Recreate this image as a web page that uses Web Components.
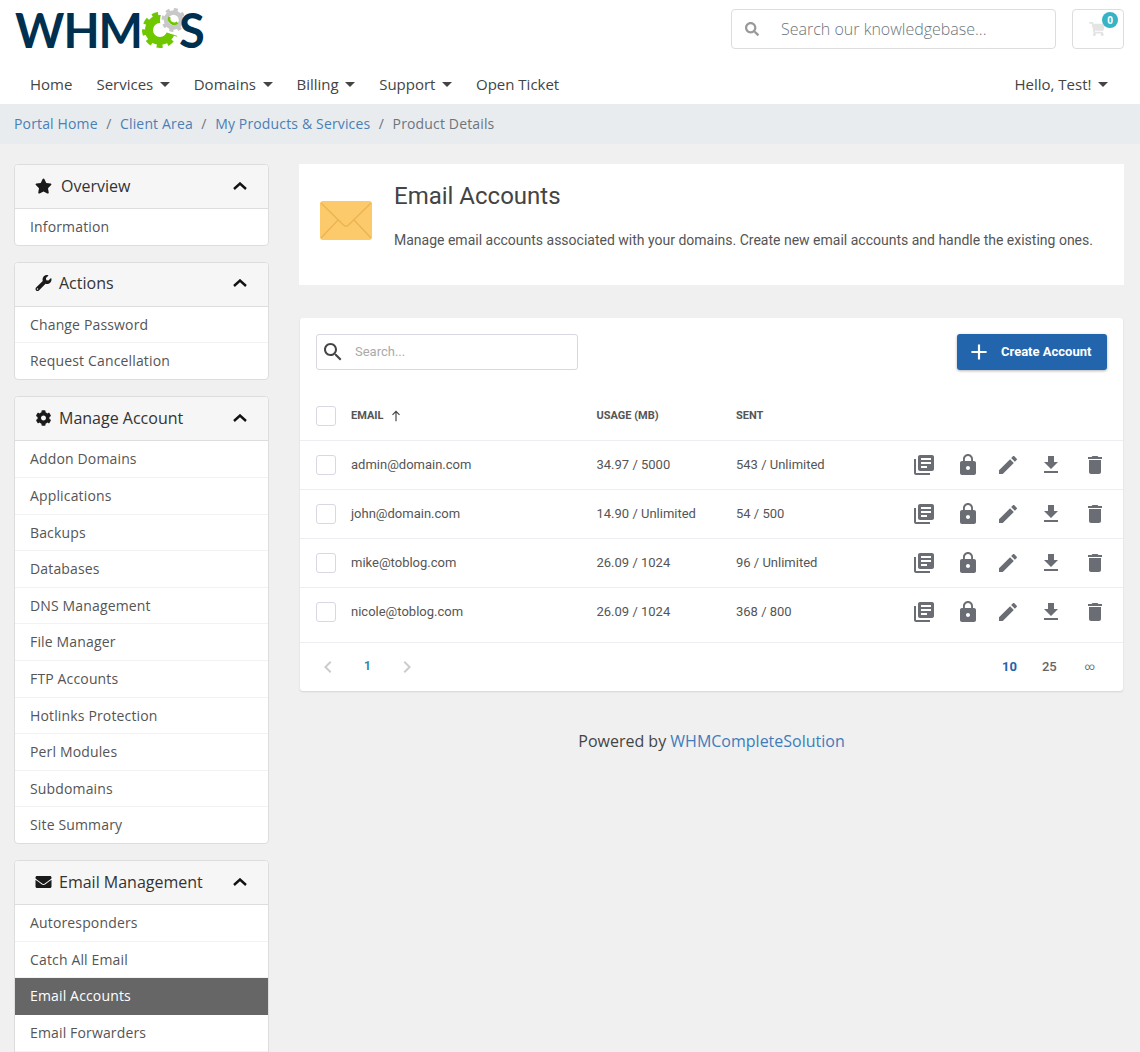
<!DOCTYPE html>
<html lang="en">
  <head>
    <meta charset="UTF-8" />
    <title>Email Accounts</title>
    <style>
      html, body { margin: 0; padding: 0; height: 1052px; overflow: hidden; }
      body { background: #f0f0f0; font-family: "Open Sans", sans-serif; color: #444; }
    </style>
  </head>
  <body>
    <site-header></site-header>
    <bread-crumbs>
      <a href="#">Portal Home</a>
      <a href="#">Client Area</a>
      <a href="#">My Products &amp; Services</a>
      <span>Product Details</span>
    </bread-crumbs>
    <page-body>
      <div slot="side">
        <side-panel title="Overview" icon="star">
          <side-item>Information</side-item>
        </side-panel>
        <side-panel title="Actions" icon="wrench">
          <side-item>Change Password</side-item>
          <side-item>Request Cancellation</side-item>
        </side-panel>
        <side-panel title="Manage Account" icon="cog">
          <side-item>Addon Domains</side-item>
          <side-item>Applications</side-item>
          <side-item>Backups</side-item>
          <side-item>Databases</side-item>
          <side-item>DNS Management</side-item>
          <side-item>File Manager</side-item>
          <side-item>FTP Accounts</side-item>
          <side-item>Hotlinks Protection</side-item>
          <side-item>Perl Modules</side-item>
          <side-item>Subdomains</side-item>
          <side-item>Site Summary</side-item>
        </side-panel>
        <side-panel title="Email Management" icon="envelope">
          <side-item>Autoresponders</side-item>
          <side-item>Catch All Email</side-item>
          <side-item active>Email Accounts</side-item>
          <side-item>Email Forwarders</side-item>
          <!-- next row starts right at the bottom edge of the window, no text visible -->
          <side-item></side-item>
        </side-panel>
      </div>
      <div slot="main">
        <page-heading title="Email Accounts">Manage email accounts associated with your domains. Create new email accounts and handle the existing ones.</page-heading>
        <accounts-table>
          <account-row email="admin@domain.com" usage="34.97 / 5000" sent="543 / Unlimited"></account-row>
          <account-row email="john@domain.com" usage="14.90 / Unlimited" sent="54 / 500"></account-row>
          <account-row email="mike@toblog.com" usage="26.09 / 1024" sent="96 / Unlimited"></account-row>
          <account-row email="nicole@toblog.com" usage="26.09 / 1024" sent="368 / 800"></account-row>
        </accounts-table>
        <site-footer></site-footer>
      </div>
    </page-body>

    <template id="site-header">
      <style>
        :host { display: block; background: #fff; height: 104px; }
        .top { display: flex; align-items: flex-start; padding: 9px 16px 0 15px; height: 57px; }
        .logo { display: flex; align-items: center; height: 42px; font-family: Lato, sans-serif; font-weight: 700; font-size: 47px; color: #00304f; letter-spacing: -1px; line-height: 42px; }
        .logo svg { width: 44px; height: 44px; margin: 0 -5px 0 -2px; flex: none; }
        .search { margin-left: auto; width: 323px; height: 38px; border: 1px solid #ddd; border-radius: 4px; display: flex; align-items: center; }
        .search svg { width: 14px; height: 14px; margin: 0 22px 0 13px; fill: #999; }
        .search span { font-size: 16px; font-weight: 300; color: #6c757d; }
        .cart { margin-left: 16px; width: 50px; height: 38px; border: 1px solid #ddd; border-radius: 4px; position: relative; display: flex; align-items: center; justify-content: center; }
        .cart svg { width: 16px; height: 14px; fill: #e4e4e4; margin-left: -2px; }
        .badge { position: absolute; top: 2px; right: 5px; width: 16px; height: 16px; border-radius: 50%; background: #36b3c4; color: #fff; font-size: 10px; font-weight: 700; line-height: 16px; text-align: center; }
        nav { display: flex; gap: 24px; padding: 0 32px 2px 30px; height: 36px; align-items: center; font-size: 15px; }
        nav .hello { margin-left: auto; }
        .caret::after { content: ""; display: inline-block; margin-left: 6.5px; vertical-align: 3px; border-top: 5px solid #444; border-left: 5px solid transparent; border-right: 5px solid transparent; }
      </style>
      <div class="top">
        <div class="logo">
          <span>WHM</span>
          <svg viewBox="0 0 44 44">
            <circle cx="20" cy="22" r="11" fill="none" stroke="#6fc700" stroke-width="8"/>
            <circle cx="20" cy="22" r="16" fill="none" stroke="#6fc700" stroke-width="4" stroke-dasharray="6 5.17"/>
            <path d="M22 23L44 18V30Z" fill="#fff"/>
            <circle cx="33.5" cy="12" r="13.5" fill="#fff"/>
            <circle cx="33.5" cy="12" r="7.5" fill="none" stroke="#c8c8c8" stroke-width="4.5"/>
            <circle cx="33.5" cy="12" r="10.5" fill="none" stroke="#c8c8c8" stroke-width="3" stroke-dasharray="4 4.25"/>
            <path d="M29.5 9a5 5 0 0 0 8 5.5" fill="none" stroke="#6fc700" stroke-width="2.5"/>
          </svg>
          <span>S</span>
        </div>
        <div class="search">
          <svg viewBox="0 0 512 512"><path d="M505 442.7L405.3 343c-4.5-4.5-10.6-7-17-7H372c27.6-35.3 44-79.7 44-128C416 93.1 322.9 0 208 0S0 93.1 0 208s93.1 208 208 208c48.3 0 92.7-16.4 128-44v16.3c0 6.4 2.5 12.5 7 17l99.7 99.7c9.4 9.4 24.6 9.4 33.9 0l28.3-28.3c9.4-9.4 9.4-24.6.1-34zM208 336c-70.7 0-128-57.2-128-128 0-70.7 57.2-128 128-128 70.7 0 128 57.2 128 128 0 70.7-57.2 128-128 128z"/></svg>
          <span>Search our knowledgebase...</span>
        </div>
        <div class="cart">
          <svg viewBox="0 0 576 512"><path d="M528.12 301.319l47.273-208C578.806 78.301 567.391 64 551.99 64H159.208l-9.166-44.81C147.758 8.021 137.93 0 126.529 0H24C10.745 0 0 10.745 0 24v16c0 13.255 10.745 24 24 24h69.883l70.248 343.435C147.325 417.1 136 435.222 136 456c0 30.928 25.072 56 56 56s56-25.072 56-56c0-15.674-6.447-29.835-16.824-40h209.647C430.447 426.165 424 440.326 424 456c0 30.928 25.072 56 56 56s56-25.072 56-56c0-22.172-12.888-41.332-31.579-50.405l5.517-24.276c3.413-15.018-8.002-29.319-23.403-29.319H218.117l-6.545-32h293.145c11.206 0 20.92-7.754 23.403-18.681z"/></svg>
          <span class="badge">0</span>
        </div>
      </div>
      <nav>
        <span>Home</span>
        <span class="caret">Services</span>
        <span class="caret">Domains</span>
        <span class="caret">Billing</span>
        <span class="caret">Support</span>
        <span>Open Ticket</span>
        <span class="caret hello">Hello, Test!</span>
      </nav>
    </template>

    <template id="bread-crumbs">
      <style>
        :host { display: flex; align-items: center; box-sizing: border-box; height: 40px; padding: 0 0 2px 14px; background: #e9ecef; font-size: 14px; letter-spacing: .15px; color: #6c757d; }
        ::slotted(a) { color: #4a7fb5; text-decoration: none; }
        ::slotted(*:not(:last-child))::after { content: "/"; color: #6c757d; padding: 0 8.5px; }
      </style>
      <slot></slot>
    </template>

    <template id="page-body">
      <style>
        :host { display: grid; grid-template-columns: 255px 825px; column-gap: 30px; padding: 20px 0 0 14px; }
      </style>
      <slot name="side"></slot>
      <slot name="main"></slot>
    </template>

    <template id="side-panel">
      <style>
        :host { display: block; width: 255px; box-sizing: border-box; margin-bottom: 16.3px; background: #fff; border: 1px solid #ddd; border-radius: 4px; }
        .head { display: flex; align-items: center; box-sizing: border-box; height: 44px; background: #f6f6f6; border-bottom: 1px solid #ddd; border-radius: 3px 3px 0 0; padding: 0 21px 2px 20px; font-size: 16px; color: #333; }
        .icon { width: 17px; height: 16px; margin-right: 7px; fill: #1a1a1a; flex: none; }
        :host([icon="star"]) .icon { margin-right: 9px; }
        .chev { margin-left: auto; width: 14px; height: 8px; fill: none; stroke: #111; stroke-width: 2.4; }
      </style>
      <div class="head">
        <svg class="icon"></svg>
        <span class="title"></span>
        <svg class="chev" viewBox="0 0 14 8"><path d="M1 7l6-5.5L13 7"/></svg>
      </div>
      <slot></slot>
    </template>

    <template id="side-item">
      <style>
        :host { display: block; height: 36.6px; box-sizing: border-box; padding: 0 15px; line-height: 36px; font-size: 14px; letter-spacing: .15px; color: #555; border-bottom: 1px solid #f2f2f2; }
        :host(:last-child) { height: 35.6px; border-bottom: 0; }
        :host([active]) { background: #666; color: #fff; border-bottom-color: #666; }
      </style>
      <slot></slot>
    </template>

    <template id="page-heading">
      <style>
        :host { display: flex; box-sizing: border-box; height: 121px; background: #fff; font-family: Roboto, sans-serif; color: #555; }
        svg { width: 52px; height: 39px; margin: 37px 22px 0 21px; flex: none; }
        h1 { margin: 17px 0 0; font-size: 24px; line-height: 30px; font-weight: 400; color: #444; }
        p { margin: 19px 0 0; font-size: 14px; line-height: 20px; }
      </style>
      <svg viewBox="0 0 52 39">
        <rect width="52" height="39" rx="3" fill="#fcc96b"/>
        <path d="M1 2l22.5 22a3.5 3.5 0 0 0 5 0L51 2M1 37l17-18M51 37L34 19" fill="none" stroke="#eab44f" stroke-width="1.2"/>
      </svg>
      <div><h1></h1><p><slot></slot></p></div>
    </template>

    <template id="accounts-table">
      <style>
        :host { display: block; margin: 33px 1px 0 1px; background: #fff; border-radius: 3px; box-shadow: 0 1px 2px rgba(0,0,0,.12); font-family: Roboto, sans-serif; font-size: 13px; color: #555; }
        .tools { display: flex; align-items: center; justify-content: space-between; padding: 16px 16px 0 16px; height: 36px; }
        .find { display: flex; align-items: center; box-sizing: border-box; width: 262px; height: 36px; border: 1px solid #d8d8e2; border-radius: 3px; color: #aaa; font-size: 13px; }
        .find span, .create span { padding-bottom: 2px; }
        .find svg { width: 24px; height: 24px; margin: 0 10px 0 4px; fill: #444; }
        .create { display: flex; align-items: center; box-sizing: border-box; width: 150px; height: 36px; padding-left: 9px; background: #2265ac; color: #fff; border-radius: 3px; font-weight: 700; font-size: 13px; box-shadow: 0 1px 3px rgba(0,0,0,.3); }
        .create svg { width: 26px; height: 26px; margin-right: 9px; fill: #fff; }
        .cols { display: grid; grid-template-columns: 20px 230.5px 124.5px 1fr; column-gap: 15px; align-items: center; height: 49px; margin-top: 21px; padding-left: 16px; border-bottom: 1px solid #ededf2; font-size: 11px; font-weight: 700; text-transform: uppercase; color: #555; }
        .cols > :nth-child(2) { display: flex; align-items: center; gap: 6px; }
        .cols svg { width: 14px; height: 14px; fill: #444; }
        .box { width: 20px; height: 20px; box-sizing: border-box; border: 1px solid #d8d8e2; border-radius: 3px; }
        .pages { display: flex; align-items: center; height: 48px; padding: 0 28px 0 16px; margin-top: 6px; border-top: 1px solid #ededf2; font-size: 13px; font-weight: 500; color: #666; }
        .pages svg { width: 24px; height: 24px; fill: #ccc; }
        .one { color: #2e86ab; margin: 0 24px; padding-bottom: 2px; font-size: 12px; font-weight: 700; }
        .sizes { margin-left: auto; display: flex; align-items: center; padding-bottom: 2px; }
        .sizes b { color: #2265ac; font-weight: 700; margin-right: 25px; }
        .sizes span:last-child { font-size: 10px; font-weight: 400; margin-left: 28px; }
      </style>
      <div class="tools">
        <div class="find">
          <svg viewBox="0 0 24 24"><path d="M15.5 14h-.79l-.28-.27C15.41 12.59 16 11.11 16 9.5 16 5.91 13.09 3 9.5 3S3 5.91 3 9.5 5.91 16 9.5 16c1.61 0 3.09-.59 4.23-1.57l.27.28v.79l5 4.99L20.49 19l-4.99-5zm-6 0C7.01 14 5 11.99 5 9.5S7.01 5 9.5 5 14 7.01 14 9.5 11.99 14 9.5 14z"/></svg>
          <span>Search...</span>
        </div>
        <div class="create">
          <svg viewBox="0 0 24 24"><path d="M19 13h-6v6h-2v-6H5v-2h6V5h2v6h6v2z"/></svg>
          <span>Create Account</span>
        </div>
      </div>
      <div class="cols">
        <div class="box"></div>
        <div>Email <svg viewBox="0 0 24 24"><path d="M11 21V6.5L6.7 10.8 5.3 9.4 12 2.7l6.7 6.7-1.4 1.4L13 6.5V21z"/></svg></div>
        <div>Usage (MB)</div>
        <div>Sent</div>
      </div>
      <slot></slot>
      <div class="pages">
        <svg viewBox="0 0 24 24"><path d="M15.41 7.41L14 6l-6 6 6 6 1.41-1.41L10.83 12z"/></svg>
        <span class="one">1</span>
        <svg viewBox="0 0 24 24"><path d="M10 6L8.59 7.41 13.17 12l-4.58 4.59L10 18l6-6z"/></svg>
        <div class="sizes"><b>10</b><span>25</span><span>∞</span></div>
      </div>
    </template>

    <template id="account-row">
      <style>
        :host { display: grid; grid-template-columns: 20px 230.5px 124.5px 1fr auto; column-gap: 15px; align-items: center; height: 48px; padding: 0 16px 0 16px; border-bottom: 1px solid #ededf2; font-size: 13px; color: #555; }
        :host(:last-child) { border-bottom: 0; }
        .box { width: 20px; height: 20px; box-sizing: border-box; border: 1px solid #d8d8e2; border-radius: 3px; }
        .email, .usage, .sent { padding-bottom: 2px; }
        .acts { display: flex; gap: 20px; }
        .acts svg:nth-child(3) { margin-left: -4px; }
        .acts svg:nth-child(4) { margin-left: -1px; }
        svg { width: 24px; height: 24px; fill: #6b6d74; display: block; }
      </style>
      <div class="box"></div>
      <div class="email"></div>
      <div class="usage"></div>
      <div class="sent"></div>
      <div class="acts">
        <svg viewBox="0 0 24 24"><path d="M4 6H2v14c0 1.1.9 2 2 2h14v-2H4V6zm16-4H8c-1.1 0-2 .9-2 2v12c0 1.1.9 2 2 2h12c1.1 0 2-.9 2-2V4c0-1.1-.9-2-2-2zm-1 9H9V9h10v2zm-4 4H9v-2h6v2zm4-8H9V5h10v2z"/></svg>
        <svg viewBox="0 0 24 24"><path d="M18 8h-1V6c0-2.76-2.24-5-5-5S7 3.24 7 6v2H6c-1.1 0-2 .9-2 2v10c0 1.1.9 2 2 2h12c1.1 0 2-.9 2-2V10c0-1.1-.9-2-2-2zm-6 9c-1.1 0-2-.9-2-2s.9-2 2-2 2 .9 2 2-.9 2-2 2zm3.1-9H8.9V6c0-1.71 1.39-3.1 3.1-3.1 1.71 0 3.1 1.39 3.1 3.1v2z"/></svg>
        <svg viewBox="0 0 24 24"><path d="M3 17.25V21h3.75L17.81 9.94l-3.75-3.75L3 17.25zM20.71 7.04c.39-.39.39-1.02 0-1.41l-2.34-2.34c-.39-.39-1.02-.39-1.41 0l-1.83 1.83 3.75 3.75 1.83-1.83z"/></svg>
        <svg viewBox="0 0 24 24"><path d="M19 9h-4V3H9v6H5l7 7 7-7zM5 18v2h14v-2H5z"/></svg>
        <svg viewBox="0 0 24 24"><path d="M6 19c0 1.1.9 2 2 2h8c1.1 0 2-.9 2-2V7H6v12zM19 4h-3.5l-1-1h-5l-1 1H5v2h14V4z"/></svg>
      </div>
    </template>

    <template id="site-footer">
      <style>
        :host { display: block; margin-top: 38px; text-align: center; font-size: 16px; line-height: 24px; color: #444; }
        a { color: #3f7cba; text-decoration: none; }
      </style>
      Powered by <a href="#">WHMCompleteSolution</a>
    </template>
  </body>
  <script>
    const ICONS = {
      star: ['0 0 576 512', 'M259.3 17.8L194 150.2 47.9 171.5c-26.2 3.8-36.7 36.1-17.7 54.6l105.7 103-25 145.5c-4.5 26.3 23.2 46 46.4 33.7L288 439.6l130.7 68.7c23.2 12.2 50.9-7.4 46.4-33.7l-25-145.5 105.7-103c19-18.5 8.5-50.8-17.7-54.6L382 150.2 316.7 17.8c-11.7-23.6-45.6-23.9-57.4 0z'],
      wrench: ['0 0 512 512', 'M507.73 109.1c-2.24-9.03-13.54-12.09-20.12-5.51l-74.36 74.36-67.88-11.31-11.31-67.88 74.36-74.36c6.62-6.62 3.43-17.9-5.66-20.16-47.38-11.74-99.55.91-136.58 37.93-39.64 39.64-50.55 97.1-34.05 147.2L18.74 402.76c-24.99 24.99-24.99 65.51 0 90.5 24.99 24.99 65.51 24.99 90.5 0l213.21-213.21c50.12 16.71 107.47 5.68 147.37-34.22 37.07-37.07 49.7-89.32 37.91-136.73zM64 472c-13.25 0-24-10.75-24-24 0-13.26 10.75-24 24-24s24 10.74 24 24c0 13.25-10.75 24-24 24z'],
      cog: ['0 0 512 512', 'M487.4 315.7l-42.6-24.6c4.3-23.2 4.3-47 0-70.2l42.6-24.6c4.9-2.8 7.1-8.6 5.5-14-11.1-35.6-30-67.8-54.7-94.6-3.8-4.1-10-5.1-14.8-2.3L380.8 110c-17.9-15.4-38.5-27.3-60.8-35.1V25.8c0-5.6-3.9-10.5-9.4-11.7-36.7-8.2-74.3-7.8-109.2 0-5.5 1.2-9.4 6.1-9.4 11.7V75c-22.2 7.9-42.8 19.8-60.8 35.1L88.7 85.5c-4.9-2.8-11-1.9-14.8 2.3-24.7 26.7-43.6 58.9-54.7 94.6-1.7 5.4.6 11.2 5.5 14L67.3 221c-4.3 23.2-4.3 47 0 70.2l-42.6 24.6c-4.9 2.8-7.1 8.6-5.5 14 11.1 35.6 30 67.8 54.7 94.6 3.8 4.1 10 5.1 14.8 2.3l42.6-24.6c17.9 15.4 38.5 27.3 60.8 35.1v49.2c0 5.6 3.9 10.5 9.4 11.7 36.7 8.2 74.3 7.8 109.2 0 5.5-1.2 9.4-6.1 9.4-11.7v-49.2c22.2-7.9 42.8-19.8 60.8-35.1l42.6 24.6c4.9 2.8 11 1.9 14.8-2.3 24.7-26.7 43.6-58.9 54.7-94.6 1.5-5.5-.7-11.3-5.6-14.1zM256 336c-44.1 0-80-35.9-80-80s35.9-80 80-80 80 35.9 80 80-35.9 80-80 80z'],
      envelope: ['0 0 512 512', 'M502.3 190.8c3.9-3.1 9.7-.2 9.7 4.7V400c0 26.5-21.5 48-48 48H48c-26.5 0-48-21.5-48-48V195.6c0-5 5.7-7.8 9.7-4.7 22.4 17.4 52.1 39.5 154.1 113.6 21.1 15.4 56.7 47.8 92.2 47.6 35.7.3 72-32.8 92.3-47.6 102-74.1 131.6-96.3 154-113.7zM256 320c23.2.4 56.6-29.2 73.4-41.4 132.7-96.3 142.8-104.7 173.4-128.7 5.8-4.5 9.2-11.5 9.2-18.9v-19c0-26.5-21.5-48-48-48H48C21.5 64 0 85.5 0 112v19c0 7.4 3.4 14.3 9.2 18.9 30.6 23.9 40.7 32.4 173.4 128.7 16.8 12.2 50.2 41.8 73.4 41.4z']
    }

    // Clones the template that has the same id as the tag name
    class TemplateElement extends HTMLElement {
      constructor() {
        super()
        const template = document.getElementById(this.localName)
        this.attachShadow({ mode: 'open' }).appendChild(template.content.cloneNode(true))
      }
    }

    class SidePanel extends TemplateElement {
      connectedCallback() {
        const [box, path] = ICONS[this.getAttribute('icon')]
        const icon = this.shadowRoot.querySelector('.icon')
        icon.setAttribute('viewBox', box)
        icon.innerHTML = `<path d="${path}"/>`
        this.shadowRoot.querySelector('.title').textContent = this.getAttribute('title')
      }
    }

    class PageHeading extends TemplateElement {
      connectedCallback() {
        this.shadowRoot.querySelector('h1').textContent = this.getAttribute('title')
      }
    }

    class AccountRow extends TemplateElement {
      connectedCallback() {
        for (const name of ['email', 'usage', 'sent']) {
          this.shadowRoot.querySelector('.' + name).textContent = this.getAttribute(name)
        }
      }
    }

    customElements.define('site-header', class extends TemplateElement {})
    customElements.define('bread-crumbs', class extends TemplateElement {})
    customElements.define('page-body', class extends TemplateElement {})
    customElements.define('side-panel', SidePanel)
    customElements.define('side-item', class extends TemplateElement {})
    customElements.define('page-heading', PageHeading)
    customElements.define('accounts-table', class extends TemplateElement {})
    customElements.define('account-row', AccountRow)
    customElements.define('site-footer', class extends TemplateElement {})
  </script>
</html>
